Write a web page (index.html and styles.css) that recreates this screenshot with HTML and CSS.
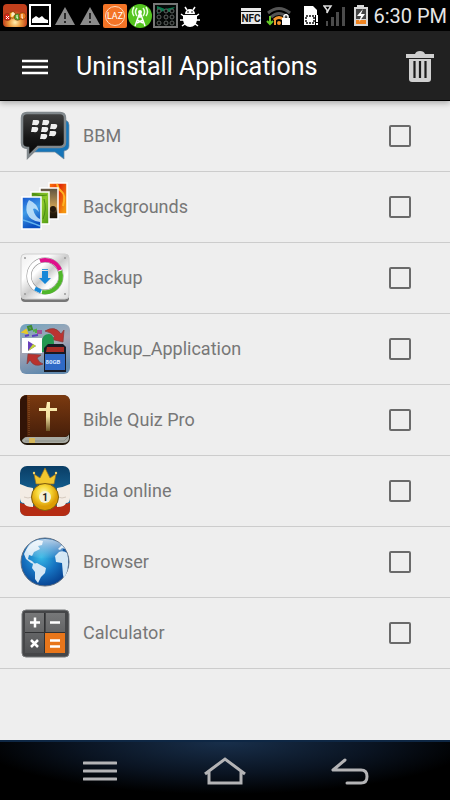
FILE: index.html
```html
<!DOCTYPE html>
<html lang="en">
<head>
  <meta charset="UTF-8" />
  <meta name="viewport" content="width=device-width, initial-scale=1" />
  <title>Uninstall Applications</title>
  <link rel="stylesheet" href="styles.css">
</head>
<body>

  <!-- status bar -->
  <div class="status">
    <div class="status-group">
      <svg width="25" height="25" viewBox="0 0 25 25">
        <defs>
          <radialGradient id="xp" cx="50%" cy="80%"><stop offset="0" stop-color="#fff0b0" /><stop offset=".5" stop-color="#eb9a3c" /><stop offset="1" stop-color="#c2401c" /></radialGradient>
        </defs>
        <rect x="0" y="1" width="24" height="23" rx="4" fill="url(#xp)" />
        <g stroke="#713214" stroke-width=".6">
          <circle cx="4.500" cy="14" r="3.5" fill="#e02418" /><circle cx="9.500" cy="12" r="3.3" fill="#f4a11d" />
          <circle cx="14.500" cy="14" r="3.3" fill="#58a72a" /><circle cx="19.500" cy="13" r="3.5" fill="#ed7b19" />
        </g>
        <path d="M3 13l3 3m0-3l-3 3M9 14v-4h2v2H9M14 12v3h1M19 11v4h1" stroke="#fff" fill="none" />
      </svg>
      <svg width="25" height="25" viewBox="0 0 25 25">
        <rect x="2" y="2" width="20" height="21" fill="#000" stroke="#fff" stroke-width="2" />
        <path d="M4 20v-4l4-3 3 2 3-2 3 3 3 1v3z" fill="#fff" />
      </svg>
      <svg width="25" height="25" viewBox="0 0 25 25">
        <path d="M12 4l10 18H2z" fill="#8b8b8b" /><path d="M12 10v6M12 18v2" stroke="#292929" stroke-width="2" />
      </svg>
      <svg width="25" height="25" viewBox="0 0 25 25">
        <path d="M12 4l10 18H2z" fill="#8b8b8b" /><path d="M12 10v6M12 18v2" stroke="#292929" stroke-width="2" />
      </svg>
      <svg width="25" height="25" viewBox="0 0 25 25">
        <rect x="0" y="1" width="24" height="24" rx="2" fill="#f47426" />
        <circle cx="12" cy="13" r="9.500" fill="none" stroke="#ffd9bc" />
        <text x="12" y="16" class="laz">LAZ</text>
      </svg>
      <svg width="25" height="25" viewBox="0 0 25 25">
        <circle cx="12" cy="13" r="12" fill="#54c51f" />
        <path d="M12 9l-5 14M12 9l5 14M9 17l6 3M15 17l-6 3M12 9v6" stroke="#fff" stroke-width="1.500" fill="none" />
        <circle cx="12" cy="9" r="2" fill="#fff" />
        <path d="M9 5q-3 4 0 8M6 4q-3 5 0 9M15 5q3 4 0 8M18 4q3 5 0 9" stroke="#e9ffdf" stroke-width="1.500" fill="none" />
      </svg>
      <svg width="25" height="25" viewBox="0 0 25 25">
        <rect x="1" y="1" width="23" height="23" fill="#050807" stroke="#777" stroke-width="2" />
        <path d="M4 3l8 3 10-2-5 5-7-1-6 3z" fill="#087a4d" />
        <g fill="#0b0b0b" stroke="#5f6562"><circle cx="6" cy="8" r="2" /><circle cx="13" cy="8" r="2" /><circle cx="19" cy="8" r="2" /><circle cx="6" cy="14" r="2" /><circle cx="13" cy="14" r="2" /><circle cx="19" cy="14" r="2" /><circle cx="6" cy="20" r="2" /><circle cx="13" cy="20" r="2" /><circle cx="19" cy="20" r="2" /></g>
      </svg>
      <svg width="25" height="25" viewBox="0 0 25 25">
        <path d="M7 11a5 5 0 0 1 10 0z" fill="#fff" />
        <path d="M5 12h14v5q-1 7-7 7t-7-7z" fill="#fff" />
        <path d="M9 7L7 4M15 7l2-3M7 14l-4-3M17 14l4-3M7 17H2M17 17h5M8 20l-4 3M16 20l4 3" stroke="#fff" stroke-width="1.500" />
        <path d="M6 11.500h12" stroke="#111" /><circle cx="10" cy="9" r=".8" /><circle cx="14" cy="9" r=".8" />
      </svg>
    </div>
    <div class="status-group">
      <svg width="28" height="25" viewBox="0 0 28 25">
        <rect x="4" y="5" width="20" height="16" fill="#e8e8e8" /><path d="M4 8.500h20" stroke="#111" />
        <text x="14" y="19" class="nfc">NFC</text>
      </svg>
      <svg width="34" height="25" viewBox="0 0 34 25">
        <path d="M3 10q11-9 22 0M6 14q8-7 16 0" fill="none" stroke="#555" stroke-width="3" />
        <path d="M9 17q5-5 10 0" fill="none" stroke="#f5952f" stroke-width="3" />
        <circle cx="14" cy="20" r="2" fill="#f5952f" />
        <path d="M5 13v8M2 18l3 3 3-3" fill="none" stroke="#66cc28" stroke-width="2" />
        <path d="M10 22v-7" stroke="#f5952f" stroke-width="2" />
        <rect x="17" y="15" width="8" height="7" fill="#fff" /><path d="M19 15v-2q2-3 4 0v2" fill="none" stroke="#fff" stroke-width="1.500" />
      </svg>
      <svg width="24" height="25" viewBox="0 0 24 25">
        <path d="M5 3h9l4 4v5h-2v10H5z" fill="#fff" />
        <rect x="7" y="13" width="8" height="7" fill="none" stroke="#111" stroke-width="1.500" stroke-dasharray="2 1" />
        <path d="M18 12v7M18 20v2" stroke="#fff" stroke-width="2" />
      </svg>
      <svg width="24" height="25" viewBox="0 0 24 25">
        <path d="M3 18h2v5H3zM8 14h3v9H8zM13 9h3v14h-3zM19 4h3v19h-3z" fill="#4b4b4b" />
        <path d="M1 3h7l-2 3-2 4V7z" fill="none" stroke="#ddd" stroke-width="1.500" />
      </svg>
      <svg width="26" height="25" viewBox="0 0 26 25">
        <path d="M10 2h7v2h4v19H7V4h3z" fill="#d6d6d6" /><path d="M9 17h10v4H9z" fill="#f08420" />
        <path d="M9 6h10v10H9z" fill="#444" /><path d="M16 6l-6 7h4l-2 6 6-8h-4z" fill="#fff" />
      </svg>
      <span class="clock">6:30 PM</span>
    </div>
  </div>

  <header class="appbar">
    <button class="icon-btn" aria-label="Menu">
      <svg width="26" height="18" viewBox="0 0 26 18"><path d="M0 3h26M0 9h26M0 15h26" stroke="#fff" stroke-width="2.400" /></svg>
    </button>
    <h1>Uninstall Applications</h1>
    <button class="icon-btn" aria-label="Uninstall selected">
      <svg width="28" height="32" viewBox="0 0 28 32">
        <path d="M0 3h9q1-3 5-3t5 3h9v4H0z" fill="#d0d0d0" />
        <path d="M3 8h22v20q0 3-3 3H6q-3 0-3-3z" fill="#d0d0d0" />
        <path d="M8.500 10v17M14 10v17M19.500 10v17" stroke="#1b1b1b" stroke-width="2.200" />
      </svg>
    </button>
  </header>

  <main>
    <ul class="apps">
      <li>
        <svg class="app-icon" viewBox="0 0 50 50">
          <defs><linearGradient id="bbm" x2="0" y2="1"><stop stop-color="#424242" /><stop offset=".55" stop-color="#171717" /><stop offset="1" stop-color="#050505" /></linearGradient></defs>
          <path d="M10 9h35q4 1 4 5v21q0 4-5 5v8l-9-7H12z" fill="#1675b8" stroke="#74899b" stroke-width=".7" />
          <path d="M7 2h33q5 0 5 5v24q0 5-5 5H18L8 46v-9q-6 0-6-5V7q0-5 5-5z" fill="url(#bbm)" stroke="#81888c" stroke-width="2.500" />
          <g fill="#eee">
            <path id="b" d="M13 9h4q3 0 2 3t-4 2h-3z" /><use href="#b" x="10" /><use href="#b" x="-1" y="7" /><use href="#b" x="9" y="7" /><use href="#b" x="18" y="4" /><use href="#b" x="17" y="11" /><use href="#b" x="8" y="14" />
          </g>
        </svg>
        <label for="app1">BBM</label>
        <input type="checkbox" id="app1" />
      </li>
      <li>
        <svg class="app-icon" viewBox="0 0 50 50">
          <defs>
            <linearGradient id="sea" x2=".3" y2="1"><stop stop-color="#1556cf" /><stop offset=".5" stop-color="#3f9ae6" /><stop offset="1" stop-color="#0a4fc0" /></linearGradient>
            <linearGradient id="leaf" x2="1" y2="1"><stop stop-color="#4b8d12" /><stop offset=".5" stop-color="#8fca2c" /><stop offset="1" stop-color="#4f9a14" /></linearGradient>
            <linearGradient id="dusk" x2="0" y2="1"><stop stop-color="#5b5040" /><stop offset=".6" stop-color="#c99e54" /><stop offset=".8" stop-color="#2a1d0d" /><stop offset="1" stop-color="#171107" /></linearGradient>
            <linearGradient id="fire" x2="1" y2=".6"><stop stop-color="#ff7a0c" /><stop offset=".5" stop-color="#e32b08" /><stop offset="1" stop-color="#f4950f" /></linearGradient>
          </defs>
          <!-- four photos, the last one at the back -->
          <rect x="29" y="1" width="18" height="31" fill="url(#fire)" stroke="#fff" stroke-width="1.500" />
          <path d="M37 2q1 5 5 8t1 14" fill="none" stroke="#ffb224" stroke-width="2" />
          <rect x="20" y="6" width="18" height="31" fill="url(#dusk)" stroke="#fff" stroke-width="1.500" />
          <circle cx="33" cy="27" r="3" fill="#22170c" />
          <rect x="11" y="10" width="18" height="32" fill="url(#leaf)" stroke="#fff" stroke-width="1.500" />
          <path d="M13 12q7 3 14 1M24 17q3 10-1 20" fill="none" stroke="#4a8c12" />
          <rect x="2" y="15" width="19" height="32" fill="url(#sea)" stroke="#fff" stroke-width="1.500" />
          <path d="M9 18q8 3 10 12-4-5-6-3 2 8 7 10v3q-10-1-13-9-2-7 2-13z" fill="#c9e8fb" opacity=".85" />
          <path d="M3 38q7 2 17 6" fill="none" stroke="#63b4ee" stroke-width="1.500" />
        </svg>
        <label for="app2">Backgrounds</label>
        <input type="checkbox" id="app2" />
      </li>
      <li>
        <svg class="app-icon" viewBox="0 0 50 50">
          <defs><linearGradient id="metal" x2="1" y2="1"><stop stop-color="#eee" /><stop offset=".3" stop-color="#fff" /><stop offset=".5" stop-color="#ccc" /><stop offset=".7" stop-color="#fff" /><stop offset="1" stop-color="#dcdcdc" /></linearGradient></defs>
          <rect x="1" y="3" width="48" height="46" rx="4" fill="#777" />
          <rect x="1" y="1" width="48" height="45" rx="4" fill="url(#metal)" stroke="#d0d0d0" />
          <circle cx="25" cy="23" r="16" fill="url(#metal)" stroke="#888" stroke-width="5" />
          <circle cx="25" cy="23" r="16" fill="none" stroke="#fff" stroke-width="4" />
          <path d="M20 7.800A16 16 0 0 1 40 17" fill="none" stroke="#df118b" stroke-width="4" />
          <path d="M40 18A16 16 0 0 1 22 39" fill="none" stroke="#50b72b" stroke-width="4" />
          <path d="M21 38.500l-6-3" stroke="#1688d8" stroke-width="4" />
          <path d="M22 18h6v7h3l-6 6-6-6h3z" fill="#1687d8" /><path d="M22 16.500h6" stroke="#3995d6" />
          <g fill="#999"><circle cx="5" cy="5" r="1" /><circle cx="45" cy="5" r="1" /><circle cx="5" cy="41" r="1" /><circle cx="45" cy="41" r="1" /></g>
        </svg>
        <label for="app3">Backup</label>
        <input type="checkbox" id="app3" />
      </li>
      <li>
        <svg class="app-icon" viewBox="0 0 50 50">
          <defs><linearGradient id="sky" x2=".3" y2="1"><stop stop-color="#70a4c1" /><stop offset=".5" stop-color="#aaa8b5" /><stop offset="1" stop-color="#638aae" /></linearGradient></defs>
          <rect width="50" height="50" rx="6" fill="url(#sky)" />
          <path d="M25 7q10-6 16 3l3-4-1 12-13-3 5-2q-4-5-10-6z" fill="#bc3431" stroke="#873837" stroke-width=".7" />
          <path d="M8 30l13 1-4 3q2 5 6 6-9 4-13-4l-3 4z" fill="#b9322e" stroke="#873837" stroke-width=".7" />
          <path d="M22 18q0-8 7-8 5 0 5 9v9H21z" fill="#239851" />
          <g stroke-width="2" fill="none"><path d="M3 8l3-2 1 3z" stroke="#e8c928" /><path d="M8 3l3-1 1 3-3 1z" stroke="#3d8c2e" /><path d="M13 7l3-1v3" stroke="#4fae44" /><path d="M18 7h3v2h-3z" stroke="#9d549a" /><path d="M5 12l4-1M12 12l6-1" stroke="#5a3fc0" /></g>
          <path d="M2 14h20v15H2z" fill="#fff" /><path d="M8 17l8 5-8 5z" fill="#6940ba" /><path d="M8 27l8-5-3-2z" fill="#c3d735" />
          <path d="M24 24l4-4h15l3 3v25H24z" fill="#181b25" /><path d="M27 23h17v5H26z" fill="#a72c25" /><path d="M25 30h20v16H25z" fill="#2f6ac6" />
          <text x="33" y="40" class="sd">80GB</text>
        </svg>
        <label for="app4">Backup_Application</label>
        <input type="checkbox" id="app4" />
      </li>
      <li>
        <svg class="app-icon" viewBox="0 0 50 50">
          <defs>
            <linearGradient id="cover" x2="0" y2="1"><stop stop-color="#7b3a10" /><stop offset="1" stop-color="#421c09" /></linearGradient>
            <linearGradient id="gold" x2="0" y2="1"><stop stop-color="#fff0b5" /><stop offset=".5" stop-color="#f0dfa0" /><stop offset="1" stop-color="#6e5525" /></linearGradient>
          </defs>
          <rect width="50" height="50" rx="7" fill="#211609" />
          <path d="M5 42h40q3 0 4-3v4q0 5-6 5H6q-4 0-4-3z" fill="#a8aaa3" /><path d="M5 46h39l4-4" stroke="#8a8e86" fill="none" />
          <path d="M7 0h36q7 0 7 7v28q0 7-7 7H4q-4 0-4 4V7q0-7 7-7z" fill="url(#cover)" />
          <path d="M0 7q0-6 7-7v42q-5 0-7 4z" fill="#321407" /><path d="M9 1v40" stroke="#a36835" stroke-width=".7" stroke-dasharray="1 1" />
          <path d="M27 7h3v6h7v3h-7v20h-4V16h-7v-3h7z" fill="url(#gold)" />
          <path d="M9 43h6v5H9z" fill="#d5b75b" />
        </svg>
        <label for="app5">Bible Quiz Pro</label>
        <input type="checkbox" id="app5" />
      </li>
      <li>
        <svg class="app-icon" viewBox="0 0 50 50">
          <defs>
            <linearGradient id="blue" x2="0" y2="1"><stop stop-color="#093d65" /><stop offset="1" stop-color="#2381b8" /></linearGradient>
            <radialGradient id="ball" cx=".45" cy=".35"><stop stop-color="#fff8b1" /><stop offset=".5" stop-color="#f8d939" /><stop offset="1" stop-color="#dc9d05" /></radialGradient>
          </defs>
          <rect width="50" height="50" rx="7" fill="url(#blue)" />
          <path d="M0 37q25 7 50 0v6q0 7-7 7H7q-7 0-7-7z" fill="#b52c13" />
          <path d="M0 18q6 3 13 4v19q-8 0-9-4-4 0-4-5zM50 18q-6 3-13 4v19q8 0 9-4 4 0 4-5z" fill="#f3ece4" />
          <path d="M4 31q4 2 8 0M46 31q-4 2-8 0" stroke="#d6cabf" fill="none" />
          <path d="M16 18L14 8l6 4 5-10 5 10 6-4-2 10z" fill="#f2c72e" stroke="#9e711c" stroke-width=".7" />
          <circle cx="14" cy="7" r="1.200" fill="#f8d668" /><circle cx="36" cy="7" r="1.200" fill="#f8d668" />
          <circle cx="25" cy="31" r="13.500" fill="url(#ball)" stroke="#81600c" />
          <circle cx="25" cy="31" r="6" fill="#f5f0d8" /><text x="25" y="35" class="ball-no">1</text>
        </svg>
        <label for="app6">Bida online</label>
        <input type="checkbox" id="app6" />
      </li>
      <li>
        <svg class="app-icon" viewBox="0 0 50 50">
          <defs>
            <radialGradient id="globe" cx=".42" cy=".4" r=".65"><stop stop-color="#36b9e6" /><stop offset=".5" stop-color="#1674c2" /><stop offset="1" stop-color="#063d8c" /></radialGradient>
            <linearGradient id="shine" x2="0" y2="1"><stop stop-color="#fff" stop-opacity=".7" /><stop offset="1" stop-color="#fff" stop-opacity="0" /></linearGradient>
          </defs>
          <circle cx="25" cy="25" r="24" fill="url(#globe)" stroke="#5f6f82" />
          <g fill="#d4e7f5">
            <path d="M4 17Q8 6 18 3l5 1-1 4-4 1 2 3-6 3-2 4-3-1-1 4 4 2 4 4-5-2-5-4z" />
            <path d="M13 27l4-1 9 5-1 5-4 4-3 6-3-4v-7l-3-4z" />
            <path d="M47 16q-3-3-8-1l-4 4 1 6 6 1 1 12 1 3q5-7 4-20z" />
            <path d="M38 12l4-4 3 4-3-1-2 2z" />
          </g>
          <ellipse cx="25" cy="12" rx="18" ry="10" fill="url(#shine)" />
        </svg>
        <label for="app7">Browser</label>
        <input type="checkbox" id="app7" />
      </li>
      <li>
        <svg class="app-icon" viewBox="0 0 50 50">
          <defs><linearGradient id="key" x2="0" y2="1"><stop stop-color="#777879" /><stop offset="1" stop-color="#505153" /></linearGradient></defs>
          <rect x="2" y="2" width="47" height="47" rx="4" fill="#454648" stroke="#77797b" />
          <path d="M5 5h19v19H5zM26 5h19v19H26zM5 25h19v20H5z" fill="url(#key)" /><path d="M25 25h20v20H25z" fill="#e8761b" />
          <path d="M24.500 5v40M5 24.500h40" stroke="#303133" />
          <path d="M10 14.500h10M15 9.500v10M30 14.500h10M11 32l7 7M18 32l-7 7M30 32.500h10M30 38.500h10" stroke="#fff" stroke-width="2.500" />
        </svg>
        <label for="app8">Calculator</label>
        <input type="checkbox" id="app8" />
      </li>
    </ul>
  </main>

  <nav class="navbar">
    <button aria-label="Options">
      <svg width="34" height="22" viewBox="0 0 34 22"><path d="M1 3h32M1 11h32M1 19h32" stroke="#b4b4b6" stroke-width="3" stroke-linecap="round" /></svg>
    </button>
    <button aria-label="Home">
      <svg width="44" height="30" viewBox="0 0 44 30"><path d="M2 18L22 3l20 15M6 16v11h32V16" fill="none" stroke="#b4b4b6" stroke-width="3" /></svg>
    </button>
    <button aria-label="Back">
      <svg width="38" height="28" viewBox="0 0 38 28"><path d="M14 3L2 13h28q6 0 6 6.500T30 26H16" fill="none" stroke="#b4b4b6" stroke-width="3" stroke-linecap="round" stroke-linejoin="round" /></svg>
    </button>
  </nav>

</body>
</html>
```

FILE: styles.css
```css
* {
  box-sizing: border-box;
}
body {
  margin: 0;
  min-height: 100vh;
  display: flex;
  flex-direction: column;
  background-color: #eee;
  font-family: Roboto, sans-serif;
}
svg {
  display: block;
  flex-shrink: 0;
}
button {
  display: flex;
  align-items: center;
  justify-content: center;
  padding: 0;
  border: none;
  background: none;
}

/* status bar */
.status {
  display: flex;
  justify-content: space-between;
  height: 31px;
  padding: 0 3px;
  background-color: #000;
}
.status-group {
  display: flex;
  align-items: center;
}
.clock {
  color: #e6e6e6;
  font-size: 20px;
  white-space: nowrap;
}
.laz {
  font-size: 9px;
  fill: #fff;
  text-anchor: middle;
}
.nfc {
  font-size: 10px;
  font-weight: bold;
  fill: #111;
  text-anchor: middle;
}

/* title bar */
.appbar {
  position: relative;
  display: flex;
  align-items: center;
  height: 70px;
  padding: 3px 16px 0 22px;
  background-color: #212121;
  border-bottom: 1px solid #000;
  box-shadow: 0 2px 6px rgba(0, 0, 0, 0.3);
}
.appbar h1 {
  flex: 1;
  margin: 0 0 0 28px;
  color: #fff;
  font-size: 25px;
  font-weight: normal;
  line-height: 32px;
}

/* list of apps */
main {
  flex: 1;
}
.apps {
  margin: 0;
  padding: 0;
  list-style: none;
}
.apps li {
  display: flex;
  align-items: center;
  height: 71px;
  padding: 0 39px 0 20px;
  border-bottom: 1px solid #ccc;
}
.app-icon {
  width: 50px;
  height: 50px;
}
.apps label {
  flex: 1;
  padding-left: 13px;
  color: #777;
  font-size: 18px;
  line-height: 24px;
}
.apps input {
  appearance: none;
  width: 22px;
  height: 22px;
  margin: 0;
  border: 2px solid #6a6a6a;
  border-radius: 2px;
}
.apps input:checked {
  background-color: #6a6a6a;
}
.sd {
  font-size: 6px;
  font-weight: bold;
  fill: #d9e9ff;
  text-anchor: middle;
}
.ball-no {
  font-size: 10px;
  font-weight: bold;
  fill: #222;
  text-anchor: middle;
}

/* bottom keys */
.navbar {
  display: flex;
  justify-content: center;
  height: 60px;
  background: radial-gradient(ellipse 55% 90% at 50% 0, #182f4b, #0a1422 60%, #000);
  border-top: 2px solid #0e2744;
}
.navbar button {
  width: 125px;
}
```
